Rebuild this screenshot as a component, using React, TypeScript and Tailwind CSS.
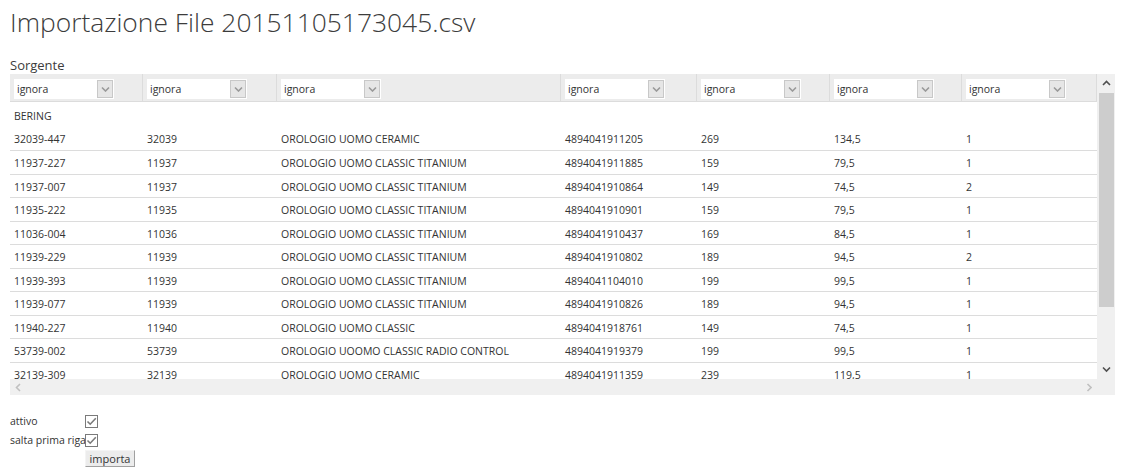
import React from "react";

const cols = [133, 134, 284, 136, 133, 132, 135];

const rows: string[][] = [
  ["BERING", "", "", "", "", "", ""],
  ["32039-447", "32039", "OROLOGIO UOMO CERAMIC", "4894041911205", "269", "134,5", "1"],
  ["11937-227", "11937", "OROLOGIO UOMO CLASSIC TITANIUM", "4894041911885", "159", "79,5", "1"],
  ["11937-007", "11937", "OROLOGIO UOMO CLASSIC TITANIUM", "4894041910864", "149", "74,5", "2"],
  ["11935-222", "11935", "OROLOGIO UOMO CLASSIC TITANIUM", "4894041910901", "159", "79,5", "1"],
  ["11036-004", "11036", "OROLOGIO UOMO CLASSIC TITANIUM", "4894041910437", "169", "84,5", "1"],
  ["11939-229", "11939", "OROLOGIO UOMO CLASSIC TITANIUM", "4894041910802", "189", "94,5", "2"],
  ["11939-393", "11939", "OROLOGIO UOMO CLASSIC TITANIUM", "4894041104010", "199", "99,5", "1"],
  ["11939-077", "11939", "OROLOGIO UOMO CLASSIC TITANIUM", "4894041910826", "189", "94,5", "1"],
  ["11940-227", "11940", "OROLOGIO UOMO CLASSIC", "4894041918761", "149", "74,5", "1"],
  ["53739-002", "53739", "OROLOGIO UOOMO CLASSIC RADIO CONTROL", "4894041919379", "199", "99,5", "1"],
  ["32139-309", "32139", "OROLOGIO UOMO CERAMIC", "4894041911359", "239", "119,5", "1"],
];

function Chevron({ dir }: { dir: "up" | "down" | "left" | "right" }) {
  const d =
    dir === "down"
      ? "M1 1.5 L4.5 5 L8 1.5"
      : dir === "up"
      ? "M1 5 L4.5 1.5 L8 5"
      : dir === "left"
      ? "M5 1 L1.5 4.5 L5 8"
      : "M1.5 1 L5 4.5 L1.5 8";
  const w = dir === "up" || dir === "down" ? 9 : 6.5;
  const h = dir === "up" || dir === "down" ? 6.5 : 9;
  return (
    <svg width={w} height={h} viewBox={`0 0 ${w} ${h}`}>
      <path d={d} fill="none" stroke="currentColor" strokeWidth="1.6" />
    </svg>
  );
}

function Select() {
  return (
    <div className="flex h-[20px] w-[100px] items-center bg-white">
      <span className="flex-1 pl-[3px] pt-[2px] text-[10.5px] text-[#333]">ignora</span>
      <div className="mr-[1px] flex h-[18px] w-[16px] items-center justify-center border border-[#c8c8c8] bg-[#e6e6e6] text-[#999]">
        <Chevron dir="down" />
      </div>
    </div>
  );
}

function CheckBox() {
  return (
    <div className="flex h-[13px] w-[13px] items-center justify-center border border-[#7a7a7a] bg-white">
      <svg width="11" height="11" viewBox="0 0 11 11">
        <path d="M1.5 5.5 L4.2 8.2 L9.8 2.2" fill="none" stroke="#7a7a7a" strokeWidth="1.6" />
      </svg>
    </div>
  );
}

export default function App() {
  return (
    <div
      className="w-[1124px] h-[474px] overflow-hidden bg-white pl-[10px] text-[#333]"
      style={{ fontFamily: '"Open Sans", "Liberation Sans", sans-serif' }}
    >
      <h1 className="pt-[3px] h-[40px] text-[26.4px] leading-[38px] font-light text-[#3c3c3c]">
        Importazione File 20151105173045.csv
      </h1>
      <div className="mt-[16px] h-[18px] text-[13px] leading-[18px] text-[#3c3c3c]">Sorgente</div>
      <div className="flex h-[321px] w-[1105px] flex-col bg-[#f0f0f0]">
        <div className="flex h-[305px]">
          <div className="w-[1087px] overflow-hidden bg-white">
            <div className="flex h-[28px] border-b border-[#dcdcdc] bg-[#ececec]">
              {cols.map((w, i) => (
                <div
                  key={i}
                  className="h-full border-r border-[#dcdcdc] pl-[4px] pt-[5px] box-border"
                  style={{ width: w }}
                >
                  <Select />
                </div>
              ))}
            </div>
            <div className="pt-[2px]">
              {rows.map((r, ri) => (
                <div
                  key={ri}
                  className={`flex h-[23.56px] box-border border-b ${ri === 0 ? "border-transparent" : "border-[#dcdcdc]"}`}
                >
                  {r.map((c, ci) => (
                    <div
                      key={ci}
                      className="flex items-center whitespace-nowrap pl-[4px] pt-[3px] text-[10.5px] text-[#333]"
                      style={{ width: cols[ci] }}
                    >
                      {c}
                    </div>
                  ))}
                </div>
              ))}
            </div>
          </div>
          <div className="flex w-[18px] flex-col items-center bg-[#f0f0f0]">
            <div className="flex h-[19px] items-center justify-center text-[#505050]">
              <Chevron dir="up" />
            </div>
            <div className="h-[214px] w-[15px] bg-[#cdcdcd]" />
            <div className="flex-1" />
            <div className="flex h-[19px] items-center justify-center text-[#505050]">
              <Chevron dir="down" />
            </div>
          </div>
        </div>
        <div className="flex h-[16px]">
          <div className="flex w-[1087px] items-center justify-between bg-[#f0f0f0] px-[5px] text-[#c0c0c0]">
            <Chevron dir="left" />
            <Chevron dir="right" />
          </div>
          <div className="w-[18px] bg-[#f0f0f0]" />
        </div>
      </div>
      <div className="mt-[17px] flex h-[19px] items-center">
        <span className="w-[75px] whitespace-nowrap pt-[1px] text-[10.5px]">attivo</span>
        <CheckBox />
      </div>
      <div className="flex h-[19px] items-center">
        <span className="w-[75px] whitespace-nowrap pt-[1px] text-[10.5px]">salta prima riga</span>
        <CheckBox />
      </div>
      <div className="ml-[75px] flex">
        <button className="h-[17px] w-[50px] border border-t-[#f4f4f4] border-l-[#f4f4f4] border-r-[#a0a0a0] border-b-[#a0a0a0] bg-[#ececec] text-[11px] leading-[14px] text-[#333]">
          importa
        </button>
      </div>
    </div>
  );
}
